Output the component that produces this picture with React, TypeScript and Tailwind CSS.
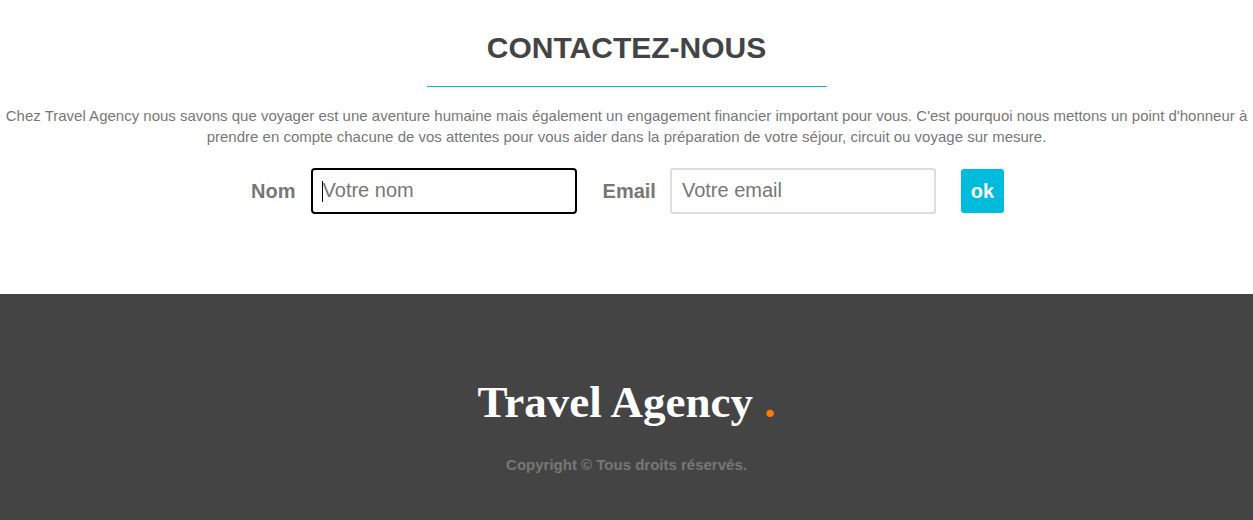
import React from 'react'

export default function App() {
  return (
    <div className="min-h-screen bg-white font-['Liberation_Sans',Arial,sans-serif]">
      {/* Contact section */}
      <section className="flex flex-col items-center pt-[31px] pb-[80px]">
        <h1 className="text-[30px] leading-[34.5px] font-bold text-[#444]">CONTACTEZ-NOUS</h1>
        <div className="mt-[20px] h-px w-[400px] bg-[#00bcd4]" />
        <p className="mt-[18px] px-[5px] text-center text-[15px] leading-[21px] text-[#777]">
          Chez Travel Agency nous savons que voyager est une aventure humaine mais également un engagement financier important
          pour vous. C'est pourquoi nous mettons un point d'honneur à prendre en compte chacune de vos attentes pour vous aider
          dans la préparation de votre séjour, circuit ou voyage sur mesure.
        </p>

        <form className="mt-[21px] flex items-center" onSubmit={(e) => e.preventDefault()}>
          <label className="mr-[15px] ml-[2px] text-[20px] font-bold text-[#777]">Nom</label>
          <div className="relative">
            <input
              type="text"
              placeholder="Votre nom"
              className="h-[46px] w-[266px] rounded-[4px] border-2 border-black px-[10px] text-[20px] text-[#444] outline-none placeholder:text-[#777]"
            />
            <span className="absolute left-[11px] top-[13px] h-[21px] w-px bg-black" />
          </div>

          <label className="ml-[26px] mr-[14px] text-[20px] font-bold text-[#777]">Email</label>
          <input
            type="email"
            placeholder="Votre email"
            className="h-[46px] w-[266px] rounded-[3px] border-2 border-[#ddd] px-[10px] text-[20px] text-[#444] outline-none placeholder:text-[#777]"
          />

          <button
            type="submit"
            className="ml-[25px] h-[44px] w-[43px] rounded-[3px] bg-[#00bcdc] text-[20px] font-bold text-white"
          >
            ok
          </button>
        </form>
      </section>

      {/* Footer */}
      <footer className="flex h-[226px] flex-col items-center bg-[#444] pt-[82px]">
        <div className="font-['Liberation_Serif','Times_New_Roman',serif] text-[45px] leading-[52px] font-bold text-white">
          Travel Agency <span className="text-[#ff7a00]">.</span>
        </div>
        <p className="mt-[26px] text-[15px] font-bold text-[#777]">Copyright © Tous droits réservés.</p>
      </footer>
    </div>
  )
}
